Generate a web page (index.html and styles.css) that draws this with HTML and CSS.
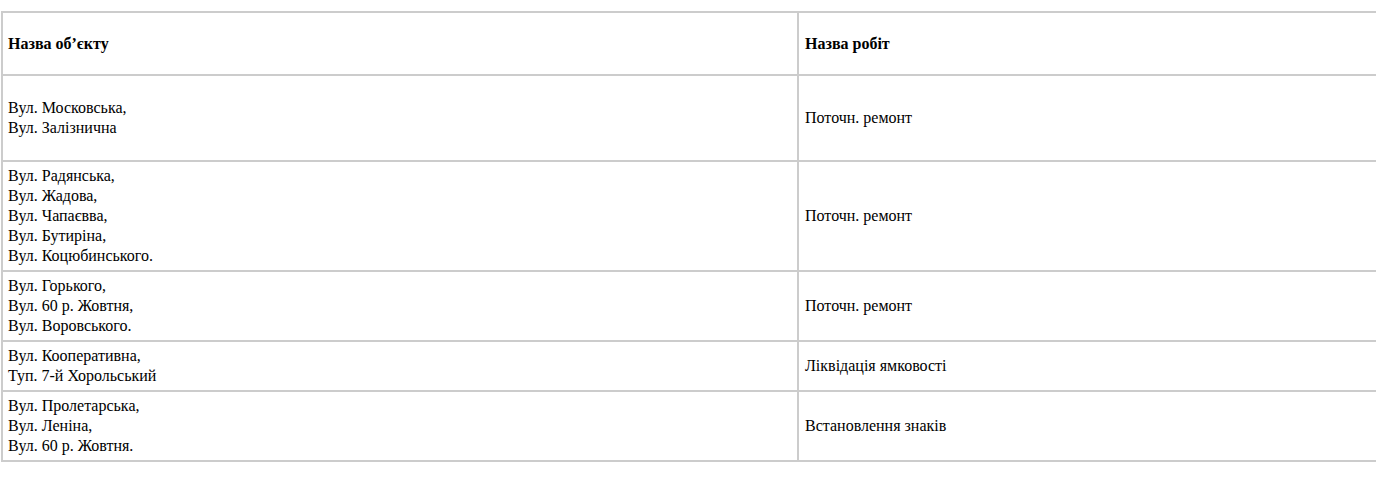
FILE: index.html
```
<!DOCTYPE html>
<html lang="uk">
<head>
<meta charset="utf-8">
<title>Роботи</title>
<link rel="stylesheet" href="styles.css">
</head>
<body>
<div class="page">
<table class="works">
<tr class="head">
<th class="c1">Назва об’єкту</th>
<th class="c2">Назва робіт</th>
</tr>
<tr class="tall">
<td>Вул. Московська,<br>Вул. Залізнична</td>
<td class="c2">Поточн. ремонт</td>
</tr>
<tr>
<td>Вул. Радянська,<br>Вул. Жадова,<br>Вул. Чапаєвва,<br>Вул. Бутиріна,<br>Вул. Коцюбинського.</td>
<td class="c2">Поточн. ремонт</td>
</tr>
<tr>
<td>Вул. Горького,<br>Вул. 60 р. Жовтня,<br>Вул. Воровського.</td>
<td class="c2">Поточн. ремонт</td>
</tr>
<tr>
<td>Вул. Кооперативна,<br>Туп. 7-й Хорольський</td>
<td class="c2">Ліквідація ямковості</td>
</tr>
<tr>
<td>Вул. Пролетарська,<br>Вул. Леніна,<br>Вул. 60 р. Жовтня.</td>
<td class="c2">Встановлення знаків</td>
</tr>
</table>
</div>
</body>
</html>
```

FILE: styles.css
```
html, body {
  margin: 0;
  padding: 0;
  background: #fff;
}
.page {
  overflow: hidden;
  padding: 11px 0 0 1px;
  width: 1375px;
}
.works {
  border-collapse: collapse;
  width: 1400px;
  font-family: "Liberation Serif", "Times New Roman", serif;
  font-size: 16px;
  line-height: 20px;
  color: #000;
}
.works th,
.works td {
  border: 2px solid #ccc;
  padding: 4px 5px;
  text-align: left;
  vertical-align: middle;
}
.works th {
  font-weight: bold;
}
.works .c1 {
  width: 784px;
}
.works .c2 {
  padding-left: 6px;
}
.head th {
  height: 53px;
}
.tall td {
  height: 76px;
}
```
